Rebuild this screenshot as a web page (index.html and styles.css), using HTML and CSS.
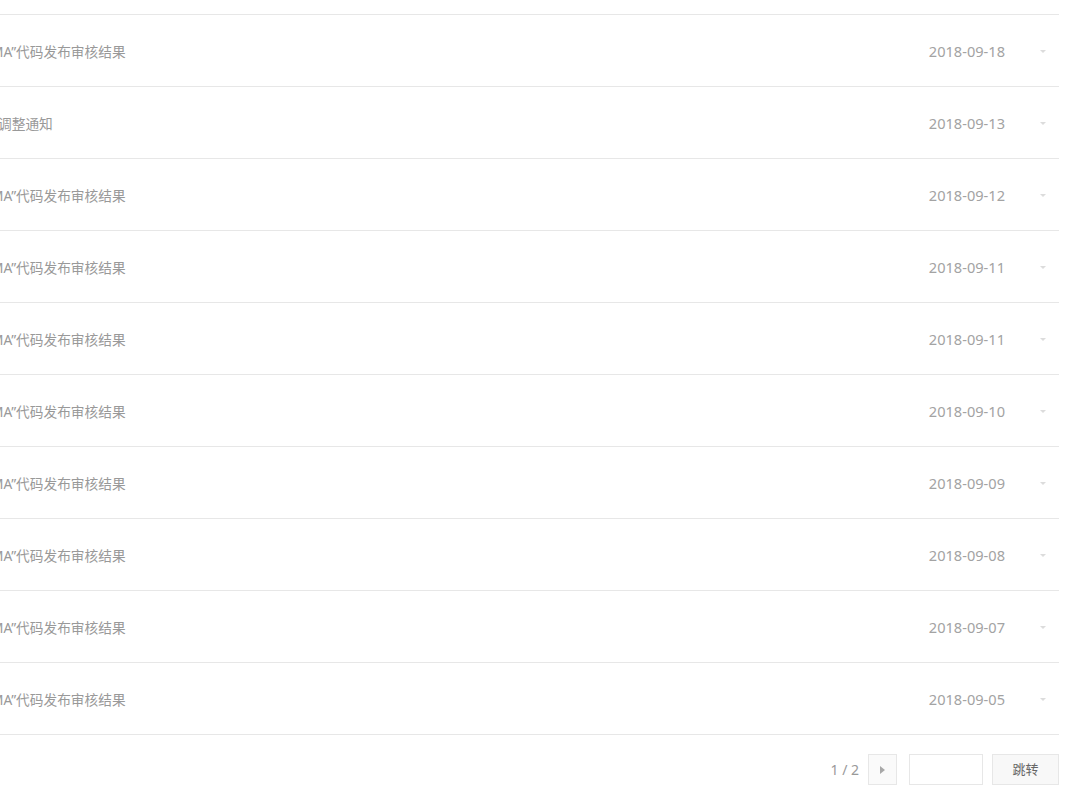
FILE: index.html
```html
<!DOCTYPE html>
<html lang="zh-CN">
<head>
    <meta charset="UTF-8">
    <title>系统通知</title>
    <link rel="stylesheet" href="styles.css">
</head>
<body>
    <div class="notice-panel">
        <ul class="notice-list">
            <li class="notice-item">
                <span class="notice-title"><span class="title-text">MA”代码发布审核结果</span></span>
                <span class="notice-date">2018-09-18</span>
                <span class="notice-toggle"><i class="caret"></i></span>
            </li>
            <li class="notice-item">
                <span class="notice-title"><span class="title-text short">调整通知</span></span>
                <span class="notice-date">2018-09-13</span>
                <span class="notice-toggle"><i class="caret"></i></span>
            </li>
            <li class="notice-item">
                <span class="notice-title"><span class="title-text">MA”代码发布审核结果</span></span>
                <span class="notice-date">2018-09-12</span>
                <span class="notice-toggle"><i class="caret"></i></span>
            </li>
            <li class="notice-item">
                <span class="notice-title"><span class="title-text">MA”代码发布审核结果</span></span>
                <span class="notice-date">2018-09-11</span>
                <span class="notice-toggle"><i class="caret"></i></span>
            </li>
            <li class="notice-item">
                <span class="notice-title"><span class="title-text">MA”代码发布审核结果</span></span>
                <span class="notice-date">2018-09-11</span>
                <span class="notice-toggle"><i class="caret"></i></span>
            </li>
            <li class="notice-item">
                <span class="notice-title"><span class="title-text">MA”代码发布审核结果</span></span>
                <span class="notice-date">2018-09-10</span>
                <span class="notice-toggle"><i class="caret"></i></span>
            </li>
            <li class="notice-item">
                <span class="notice-title"><span class="title-text">MA”代码发布审核结果</span></span>
                <span class="notice-date">2018-09-09</span>
                <span class="notice-toggle"><i class="caret"></i></span>
            </li>
            <li class="notice-item">
                <span class="notice-title"><span class="title-text">MA”代码发布审核结果</span></span>
                <span class="notice-date">2018-09-08</span>
                <span class="notice-toggle"><i class="caret"></i></span>
            </li>
            <li class="notice-item">
                <span class="notice-title"><span class="title-text">MA”代码发布审核结果</span></span>
                <span class="notice-date">2018-09-07</span>
                <span class="notice-toggle"><i class="caret"></i></span>
            </li>
            <li class="notice-item">
                <span class="notice-title"><span class="title-text">MA”代码发布审核结果</span></span>
                <span class="notice-date">2018-09-05</span>
                <span class="notice-toggle"><i class="caret"></i></span>
            </li>
        </ul>

        <div class="pagination">
            <span class="page-num">1 / 2</span>
            <a class="page-next" href="#"><i class="arrow-right"></i></a>
            <input class="page-input" type="text">
            <a class="page-go" href="#">跳转</a>
        </div>
    </div>
</body>
</html>
```

FILE: styles.css
```css
body {
    margin: 0;
    background: #fff;
    font-family: "Noto Sans", "Noto Sans CJK SC", sans-serif;
    color: #999;
    overflow: hidden;
}

.notice-panel {
    width: 1059px;
}

.notice-list {
    list-style: none;
    margin: 14px 0 0 0;
    padding: 0;
    border-top: 1px solid #e7e7e7;
}

.notice-item {
    display: flex;
    align-items: center;
    height: 70px;
    padding-top: 1px;
    border-bottom: 1px solid #e7e7e7;
}

.notice-title {
    flex: 1;
    overflow: hidden;
    white-space: nowrap;
    font-size: 13.7px;
}

.title-text {
    display: inline-block;
    margin-left: -9px;
}

.title-text.short {
    margin-left: -2px;
}

.notice-date {
    font-size: 14.6px;
    color: #a3a3a3;
}

.notice-toggle {
    width: 54px;
    display: flex;
    justify-content: flex-end;
    padding-right: 13px;
    box-sizing: border-box;
}

.caret {
    display: block;
    width: 0;
    height: 0;
    border-left: 3px solid transparent;
    border-right: 3px solid transparent;
    border-top: 3px solid #dcdcdc;
}

.pagination {
    display: flex;
    justify-content: flex-end;
    align-items: center;
    padding-top: 19px;
}

.page-num {
    font-size: 14px;
    color: #999;
    margin-right: 9px;
}

.page-next {
    width: 27px;
    height: 29px;
    border: 1px solid #e7e7e7;
    background: #fafafa;
    display: flex;
    align-items: center;
    justify-content: center;
    margin-right: 12px;
}

.arrow-right {
    display: block;
    width: 0;
    height: 0;
    border-top: 4px solid transparent;
    border-bottom: 4px solid transparent;
    border-left: 5px solid #a8a8a8;
}

.page-input {
    width: 72px;
    height: 29px;
    box-sizing: content-box;
    border: 1px solid #e7e7e7;
    padding: 0;
    margin: 0 9px 0 0;
    outline: none;
}

.page-go {
    width: 65px;
    height: 29px;
    line-height: 29px;
    text-align: center;
    border: 1px solid #e7e7e7;
    background: #f8f8f8;
    color: #666;
    font-size: 13px;
    text-decoration: none;
}
```
